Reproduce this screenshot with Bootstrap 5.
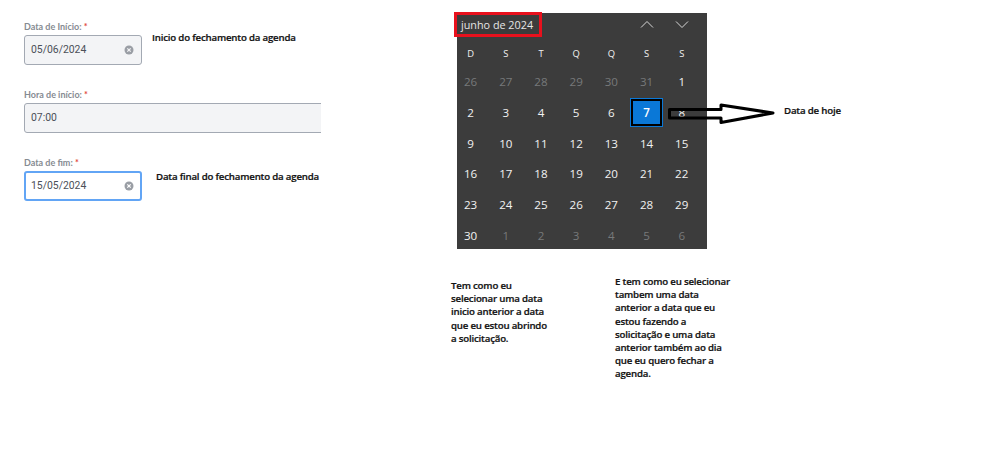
<!DOCTYPE html>
<html lang="pt-BR">
<head>
<meta charset="utf-8">
<title>Fechamento da agenda</title>
<link href="https://cdn.jsdelivr.net/npm/bootstrap@5.3.0/dist/css/bootstrap.min.css" rel="stylesheet">
<style>
html,body{height:450px;overflow:hidden;background:#fff}
.canvas{position:relative;width:998px;height:450px;overflow:hidden}
.note{font-family:"Open Sans","Liberation Sans",sans-serif;font-weight:600;font-size:9.7px;letter-spacing:-.2px;line-height:13.2px;color:#111;-webkit-text-stroke:.2px #111;white-space:nowrap}
.formcol{width:321px;padding:21px 0 0 24px;overflow:hidden;flex:none}
.fgroup{height:68px}
.flabel{font-family:Lato,"Liberation Sans",sans-serif;font-size:9px;line-height:12px;color:#868b92;height:14px;font-weight:700}
.flabel i{color:#e2483d;font-style:normal}
.fbox{height:29.5px;display:flex;align-items:center;justify-content:space-between;padding:0 7px 0 6px;background:#f3f4f6;border:1px solid #a3a9b3;border-radius:3px;font-family:Roboto,"Liberation Sans",sans-serif;font-size:10.4px;color:#4b5058;width:118px}
.fbox.wide{width:310px;border-radius:3px 0 0 3px}
.fbox.act{background:#fff;border:2px solid #62a5f5;padding:0 6px 0 5px}
.note1{position:absolute;left:152px;top:31px}
.note2{position:absolute;left:156px;top:170px}
.caldark{position:absolute;left:457px;top:13px;width:250px;height:236px;background:#3c3c3c;color:#f2f2f2;font-family:"Open Sans","Noto Sans",sans-serif}
.calhead{height:24px;padding:0 0 0 4px;font-size:10.8px;color:#e6e6e6;line-height:24px}
.calgrid{display:grid;grid-template-columns:repeat(7,35.2px);margin-left:-4px;padding-top:1px;grid-auto-rows:30.7px;text-align:center;margin-top:-2px}
.calgrid>span{display:flex;align-items:center;justify-content:center;font-size:11.6px}
.calgrid>span.wd{font-size:9.4px;font-weight:500;height:25px;align-self:start;margin-top:6px}
.calgrid>span.off{color:#77797a}
.calgrid>span.today{background:#0a78d7;color:#fff;font-weight:600;border:2px solid #000;outline:1px solid #0a78d7;height:27px;width:31px;justify-self:center;align-self:center}
.monthbox{position:absolute;left:454px;top:12px;width:88px;height:25px;border:3px solid #e8111d}
.chev{position:absolute;top:20px}
.arrow{position:absolute;left:664px;top:100px}
.note3{position:absolute;left:784px;top:104px}
.note4{position:absolute;left:451px;top:279px}
.note5{position:absolute;left:615px;top:275px}
</style>
</head>
<body>
<div class="canvas d-flex">
  <div class="formcol">
    <div class="fgroup">
      <div class="flabel">Data de Início: <i>*</i></div>
      <div class="fbox"><span>05/06/2024</span>
        <svg width="10" height="10" viewBox="0 0 10 10"><circle cx="5" cy="5" r="4.5" fill="#9a9ea5"/><path d="M3.3 3.3l3.4 3.4M6.7 3.3L3.3 6.7" stroke="#f3f4f6" stroke-width="1.2"/></svg>
      </div>
    </div>
    <div class="fgroup">
      <div class="flabel">Hora de início: <i>*</i></div>
      <div class="fbox wide"><span>07:00</span></div>
    </div>
    <div class="fgroup">
      <div class="flabel">Data de fim: <i>*</i></div>
      <div class="fbox act"><span>15/05/2024</span>
        <svg width="10" height="10" viewBox="0 0 10 10"><circle cx="5" cy="5" r="4.5" fill="#9a9ea5"/><path d="M3.3 3.3l3.4 3.4M6.7 3.3L3.3 6.7" stroke="#fff" stroke-width="1.2"/></svg>
      </div>
    </div>
  </div>

  <div class="note note1">Inicio do fechamento da agenda</div>
  <div class="note note2">Data final do fechamento da agenda</div>

  <div class="caldark">
    <div class="calhead">junho de 2024</div>
    <div class="calgrid">
      <span class="wd">D</span><span class="wd">S</span><span class="wd">T</span><span class="wd">Q</span><span class="wd">Q</span><span class="wd">S</span><span class="wd">S</span>
      <span class="off">26</span><span class="off">27</span><span class="off">28</span><span class="off">29</span><span class="off">30</span><span class="off">31</span><span>1</span>
      <span>2</span><span>3</span><span>4</span><span>5</span><span>6</span><span class="today">7</span><span>8</span>
      <span>9</span><span>10</span><span>11</span><span>12</span><span>13</span><span>14</span><span>15</span>
      <span>16</span><span>17</span><span>18</span><span>19</span><span>20</span><span>21</span><span>22</span>
      <span>23</span><span>24</span><span>25</span><span>26</span><span>27</span><span>28</span><span>29</span>
      <span>30</span><span class="off">1</span><span class="off">2</span><span class="off">3</span><span class="off">4</span><span class="off">5</span><span class="off">6</span>
    </div>
  </div>
  <div class="monthbox"></div>
  <svg class="chev" style="left:640px" width="14" height="9" viewBox="0 0 14 9"><path d="M1 7.5L7 1.5l6 6" fill="none" stroke="#d8d8d8" stroke-width="1"/></svg>
  <svg class="chev" style="left:675px" width="14" height="9" viewBox="0 0 14 9"><path d="M1 1.5l6 6 6-6" fill="none" stroke="#d8d8d8" stroke-width="1"/></svg>

  <svg class="arrow" width="112" height="26" viewBox="664 100 112 26"><path d="M669.5 109.5H721V105L773 113L721 122.5V118H669.5Z" fill="none" stroke="#000" stroke-width="3" stroke-linejoin="round"/></svg>

  <div class="note note3">Data de hoje</div>
  <div class="note note4">Tem como eu<br>selecionar uma data<br>inicio anterior a data<br>que eu estou abrindo<br>a solicitação.</div>
  <div class="note note5">E tem como eu selecionar<br>tambem uma data<br>anterior a data que eu<br>estou fazendo a<br>solicitação e uma data<br>anterior também ao dia<br>que eu quero fechar a<br>agenda.</div>
</div>
<script src="https://cdn.jsdelivr.net/npm/bootstrap@5.3.0/dist/js/bootstrap.bundle.min.js"></script>
</body>
</html>
